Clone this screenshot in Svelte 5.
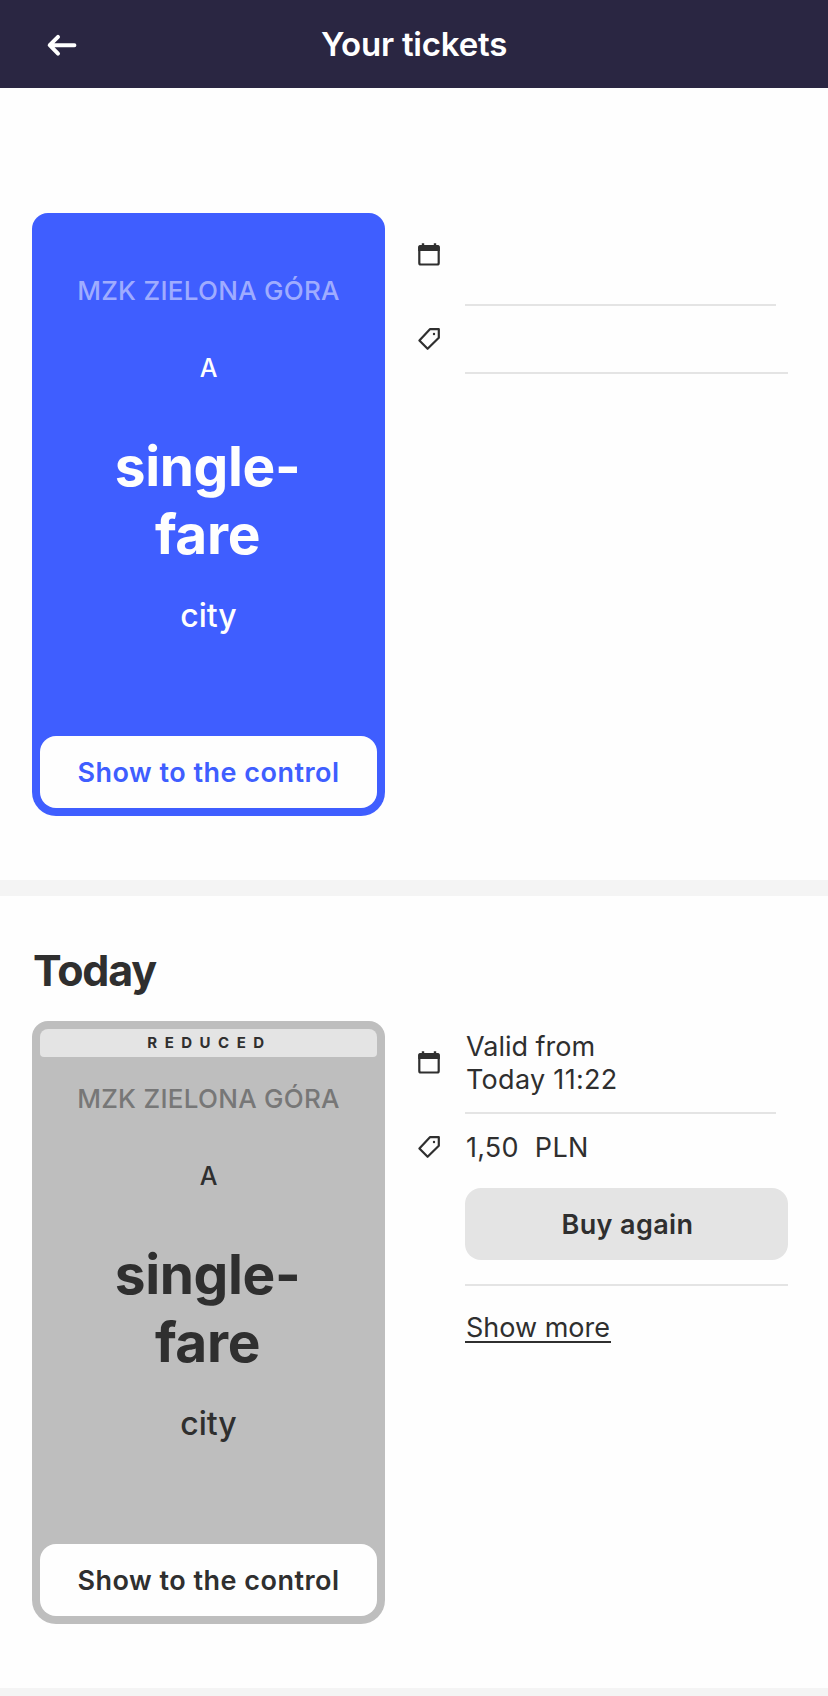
<script>
  const tickets = [
    { id: 1, active: true, heading: '', reduced: false, valid: null, price: null },
    { id: 2, active: false, heading: 'Today', reduced: true, valid: ['Valid from', 'Today 11:22'], price: ['1,50', 'PLN'] }
  ];
</script>

<div class="page">
  <header>
    <button class="back" aria-label="Back">
      <svg width="32" height="24" viewBox="0 0 32 24">
        <path d="M12 3.8 3.7 12.2 12 20.6M4.5 12.2H28.4" />
      </svg>
    </button>
    <h1>Your tickets</h1>
  </header>

  {#each tickets as t (t.id)}
    <section>
      <h2>{t.heading}</h2>
      <div class="row">
        <article class="card" class:active={t.active}>
          <div class="banner" class:reduced={t.reduced}>{t.reduced ? 'REDUCED' : ''}</div>
          <div class="provider">MZK ZIELONA GÓRA</div>
          <div class="zone">A</div>
          <div class="name"><div>single-</div><div>fare</div></div>
          <div class="area">city</div>
          <button class="show">Show to the control</button>
        </article>

        <div class="details">
          <div class="line valid">
            <svg class="icon" width="24" height="24" viewBox="0 0 24 24">
              <rect x="2.3" y="3.3" width="19.4" height="18.2" rx="1.5" fill="none" stroke="#2f2f2f" stroke-width="2.2" />
              <path d="M1.2 8V4Q1.2 2 3.2 2H4.8V.2H7.2V2H16.8V.2H19.2V2H20.8Q22.8 2 22.8 4V8Z" fill="#2f2f2f" />
            </svg>
            <div class="text">
              {#if t.valid}{#each t.valid as v, i}<div class:date={i === 1}>{v}</div>{/each}{/if}
            </div>
          </div>
          <div class="line price">
            <svg class="icon" width="24" height="24" viewBox="0 0 24 24">
              <path d="M12.9 2.2H21.8V10.8L10.6 21.8 2.4 13.4Z" fill="none" stroke="#2f2f2f" stroke-width="2.2" stroke-linejoin="round" />
              <circle cx="17" cy="7" r="1.2" fill="#2f2f2f" />
            </svg>
            <div class="text amount">
              {#if t.price}<span>{t.price[0]}</span><span class="currency">{t.price[1]}</span>{/if}
            </div>
          </div>
          <div class="actions" class:filled={!t.active}>
            {#if !t.active}<button class="buy">Buy again</button>{/if}
          </div>
          {#if !t.active}<a class="more" href="#more">Show more</a>{/if}
        </div>
      </div>
    </section>
  {/each}
</div>

<style>
  :global(body) { background: #fefefe; }
  .page {
    width: 828px;
    height: 1696px;
    overflow: hidden;
    background: #fefefe;
    color: #2f2f2f;
    font-family: Inter, "Liberation Sans", sans-serif;
    font-size: 27px;
  }
  button { border: 0; padding: 0; font: inherit; color: inherit; }
  header {
    height: 88px;
    background: #2a2642;
    display: grid;
    grid-template-columns: 92px 1fr 92px;
    align-items: center;
    color: #fff;
  }
  .back { background: none; display: flex; justify-content: flex-end; width: 78px; padding-top: 1px; }
  .back path { fill: none; stroke: #fff; stroke-width: 4; stroke-linecap: round; stroke-linejoin: round; }
  h1 {
    margin: 0;
    text-align: center;
    font-size: 33px;
    line-height: 40px;
    font-weight: 600;
    letter-spacing: -0.2px;
  }
  section { padding: 0 40px 64px 32px; border-bottom: 16px solid #f4f4f4; }
  h2 {
    margin: 0;
    height: 125px;
    box-sizing: border-box;
    padding: 48px 0 0 1px;
    font-size: 43px;
    line-height: 52px;
    font-weight: 700;
    letter-spacing: -1.2px;
  }
  .row { display: flex; gap: 32px; }
  .card {
    width: 353px;
    height: 603px;
    box-sizing: border-box;
    padding: 8px;
    border-radius: 16px 16px 24px 24px;
    background: #bebebe;
    display: flex;
    flex-direction: column;
    text-align: center;
    flex: none;
  }
  .banner { height: 28px; flex: none; }
  .banner.reduced {
    background: #e4e4e4;
    border-radius: 8px 8px 4px 4px;
    font-size: 15px;
    font-weight: 700;
    line-height: 27px;
    letter-spacing: 7.5px;
    padding-left: 2px;
  }
  .provider { margin-top: 25.5px; line-height: 32px; font-size: 26px; font-weight: 450; letter-spacing: 0.28px; color: #777; }
  .zone { margin-top: 45px; line-height: 32px; font-size: 25px; font-weight: 450; }
  .name {
    margin-top: 48.5px;
    padding-right: 2px;
    font-size: 55px;
    line-height: 68px;
    font-weight: 700;
    letter-spacing: -0.35px;
  }
  .area { margin-top: 28px; line-height: 40px; font-size: 32px; font-weight: 450; }
  .show {
    margin-top: auto;
    height: 72px;
    border-radius: 16px;
    background: #fefefe;
    font-weight: 600;
    letter-spacing: 0.48px;
  }
  .active { background: #3f5eff; color: #fefefe; }
  .active .provider { color: #9facff; }
  .active .show { color: #3f5eff; }

  .details { flex: 1; display: flex; flex-direction: column; }
  .line { display: grid; grid-template-columns: 48px 1fr; }
  .valid { height: 93px; padding-right: 12px; }
  .valid .icon { margin-top: 30px; }
  .valid .text { padding-top: 9px; line-height: 33px; border-bottom: 2px solid #e4e4e4; }
  .text div { padding-left: 1px; }
  .date { letter-spacing: 0.3px; }
  .price { height: 66px; }
  .price .icon { margin-top: 21px; }
  .amount { padding: 18px 0 0 1px; line-height: 32px; display: flex; gap: 16px; letter-spacing: 0.24px; }
  .currency { letter-spacing: 0.4px; }
  .actions { margin-left: 48px; border-bottom: 2px solid #e4e4e4; }
  .actions.filled { padding: 8px 0 24px; }
  .buy {
    display: block;
    width: 100%;
    height: 72px;
    padding-left: 2px;
    border-radius: 16px;
    background: #e4e4e4;
    font-weight: 600;
    letter-spacing: 0.38px;
  }
  .more {
    align-self: flex-start;
    margin: 24px 0 0 48px;
    padding: 0 1px;
    height: 31px;
    line-height: 36px;
    color: inherit;
    text-decoration: none;
    border-bottom: 2px solid #2f2f2f;
  }
  .icon { display: block; }
</style>
